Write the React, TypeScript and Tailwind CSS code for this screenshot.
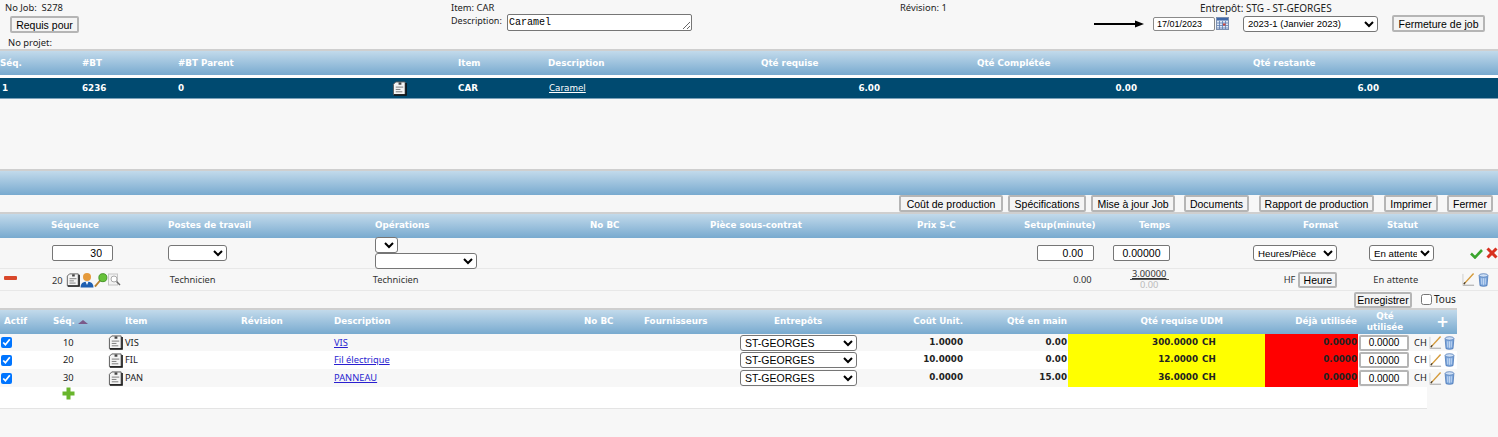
import React from "react";

// petites icônes de l'application
function NoteIcon({ className = "" }: { className?: string }) {
  return (
    <svg viewBox="0 0 16 16" className={className}>
      <path d="M1.5 3.5 L4 1 H14 V14.5 H1.5 Z" fill="#f4f4f4" stroke="#555" strokeWidth="1" />
      <path d="M2 15 H15 V2" fill="none" stroke="#111" strokeWidth="1.6" />
      <rect x="7" y="1.5" width="3" height="2.5" fill="#444" />
      <path d="M4 6.5 H12 M4 9 H9 M4 11.5 H11" stroke="#777" strokeWidth="1" />
    </svg>
  );
}

function EditIcon() {
  return (
    <svg viewBox="0 0 14 16" className="w-[13px] h-[15px]">
      <path d="M1 15 H13 V13.5 H1 Z" fill="#bbb" />
      <path d="M1 14.5 V2" stroke="#ccc" strokeWidth="1" />
      <path d="M2 13 L12.5 1.5" stroke="#d49a3a" strokeWidth="1.5" />
      <path d="M2 13 L3.5 11" stroke="#333" strokeWidth="1.2" />
    </svg>
  );
}

function TrashIcon() {
  return (
    <svg viewBox="0 0 12 16" className="w-[11px] h-[14px]">
      <path d="M1 3 L2 14.5 Q6 16 10 14.5 L11 3 Z" fill="#7fa8dc" stroke="#3e6db0" strokeWidth="0.8" />
      <ellipse cx="6" cy="2.8" rx="5" ry="2" fill="#cfe0f5" stroke="#3e6db0" strokeWidth="0.8" />
      <path d="M4 6 V13 M6 6 V13.5 M8 6 V13" stroke="#d5e4f7" strokeWidth="0.9" />
    </svg>
  );
}

function CalendarIcon() {
  return (
    <svg viewBox="0 0 13 13" className="w-[13px] h-[13px] ml-[1px]">
      <rect x="0.5" y="0.5" width="12" height="12" fill="#dfe8f4" stroke="#7b8fb0" />
      <rect x="1" y="1" width="11" height="2.5" fill="#3f67a8" />
      <path d="M1 6 H12 M1 8.5 H12 M1 11 H12 M3.5 4 V12 M6.5 4 V12 M9.5 4 V12" stroke="#5c7bb0" strokeWidth="0.8" />
      <rect x="7" y="6.5" width="2.5" height="2" fill="#d0483c" />
    </svg>
  );
}

function UserIcon() {
  return (
    <svg viewBox="0 0 14 16" className="w-[14px] h-[16px]">
      <path d="M0.5 15.5 Q0.5 9.5 7 9.5 Q13.5 9.5 13.5 15.5 Z" fill="#1f5fb0" />
      <circle cx="7" cy="5" r="4" fill="#e59a3c" />
      <path d="M5.5 9.5 L7 13 L8.5 9.5 Z" fill="#fff" />
    </svg>
  );
}

function ProbeIcon() {
  return (
    <svg viewBox="0 0 15 16" className="w-[14px] h-[16px]">
      <path d="M1 15 L7 8" stroke="#b9802e" strokeWidth="2" />
      <circle cx="9.5" cy="5.5" r="4.3" fill="#67c23a" stroke="#3f8f22" />
    </svg>
  );
}

function LensIcon() {
  return (
    <svg viewBox="0 0 13 13" className="w-[13px] h-[13px]">
      <rect x="0.5" y="1" width="9" height="11" fill="#f2f2f2" stroke="#c6c6c6" />
      <circle cx="6" cy="6" r="3" fill="#fff" stroke="#aaa" />
      <path d="M8.5 8.5 L12 12" stroke="#666" strokeWidth="1.4" />
    </svg>
  );
}

function Btn({ children, className = "" }: { children: React.ReactNode; className?: string }) {
  return (
    <button
      type="button"
      className={`shrink-0 bg-[#f4f4f4] border-2 border-[#b5b5b5] rounded-[2px] font-['Liberation_Sans',sans-serif] text-[10.5px] leading-[12px] text-black whitespace-nowrap ${className}`}
    >
      {children}
    </button>
  );
}

const selectBase =
  "h-[16px] bg-white border border-[#767676] rounded-[3px] font-['Liberation_Sans',sans-serif] leading-[14px] text-black";
const selectCls = `${selectBase} text-[9.7px]`;
const inputCls =
  "h-[16px] bg-white border border-[#767676] rounded-[2px] font-['Liberation_Sans',sans-serif] text-[10.5px] text-black";
const bandCls =
  "bg-gradient-to-b from-[#c2daeb] to-[#78aacf] border-t-2 border-[#cfcfcf] font-['DejaVu_Sans',sans-serif] font-bold text-[8.75px] text-white items-center";
const boldCls = "font-['DejaVu_Sans',sans-serif] font-bold text-[8.75px] text-[#222]";

const rows = [
  { seq: 10, item: "VIS", desc: "VIS", unit: "1.0000", main: "0.00", req: "300.0000", bg: "bg-[#f7f7f7]", h: "h-[17px]" },
  { seq: 20, item: "FIL", desc: "Fil électrique", unit: "10.0000", main: "0.00", req: "12.0000", bg: "bg-white", h: "h-[18px]" },
  { seq: 30, item: "PAN", desc: "PANNEAU", unit: "0.0000", main: "15.00", req: "36.0000", bg: "bg-[#f7f7f7]", h: "h-[18px]" },
];

const bottomGrid =
  "grid grid-cols-[53px_55px_17px_116px_93px_250px_60px_96px_130px_95px_103px_132px_65px_93px_54px_16px_29px]";

export default function App() {
  return (
    <div className="min-h-screen w-[1498px] overflow-hidden bg-[#f7f7f7] font-['Noto_Sans',sans-serif] text-[9.4px] text-[#222]">
      {/* entête de la job */}
      <div className="h-[49px] flex">
        <div className="w-[451px] shrink-0">
          <div className="pl-[5px] pt-[1px] h-[16px] leading-[14px]">No Job:&nbsp; S278</div>
          <div className="pl-[10px]">
            <Btn className="w-[69px] h-[17px]">Requis pour</Btn>
          </div>
          <div className="pl-[8px] pt-[3px] leading-[14px]">No projet:</div>
        </div>
        <div className="w-[449px] shrink-0">
          <div className="pt-[1px] h-[14px] leading-[14px]">Item: CAR</div>
          <div className="flex items-start">
            <span className="w-[56px] leading-[14px] text-[9px]">Description:</span>
            <textarea
              readOnly
              defaultValue="Caramel"
              className="w-[185px] h-[17px] bg-white border border-[#767676] rounded-[2px] px-[1px] pt-[1px] font-['Liberation_Mono',monospace] text-[10px] leading-[14px] text-black"
            />
          </div>
        </div>
        <div className="w-[100px] shrink-0 pt-[1px] leading-[14px]">Révision: 1</div>
        <div className="w-[498px] shrink-0">
          <div className="pt-[1px] h-[14px] leading-[14px] pl-[200px] text-[10px]">Entrepôt: STG - ST-GEORGES</div>
          <div className="flex items-center mt-[1px]">
            <svg viewBox="0 0 50 8" className="w-[50px] h-[8px] ml-[94px] mr-[9px] shrink-0">
              <path d="M0 4 H42" stroke="#000" strokeWidth="2" />
              <path d="M41 0.5 L50 4 L41 7.5 Z" fill="#000" />
            </svg>
            <input
              readOnly
              defaultValue="17/01/2023"
              className="w-[62px] h-[14px] bg-white border border-[#8a8a8a] rounded-[2px] px-[3px] font-['Liberation_Sans',sans-serif] text-[9px] text-black"
            />
            <CalendarIcon />
            <select className={`${selectBase} text-[9.5px] w-[135px] ml-[14px]`}>
              <option>2023-1 (Janvier 2023)</option>
            </select>
            <Btn className="w-[93px] h-[17px] ml-[14px]">Fermeture de job</Btn>
          </div>
        </div>
      </div>

      {/* liste des BT */}
      <div className={`grid grid-cols-[82px_96px_280px_90px_213px_216px_276px_245px] h-[26px] pt-[1px] ${bandCls}`}>
        <span>Séq.</span>
        <span>#BT</span>
        <span>#BT Parent</span>
        <span>Item</span>
        <span>Description</span>
        <span>Qté requise</span>
        <span>Qté Complétée</span>
        <span>Qté restante</span>
      </div>
      <div className="h-[3px] bg-white" />
      <div className="grid grid-cols-[82px_96px_214px_66px_90px_213px_216px_276px_245px] h-[21px] pt-[1px] items-center bg-[#004a70] border-b border-[#7aa0b8] font-['DejaVu_Sans',sans-serif] font-bold text-[8.75px] text-white">
        <span className="pl-[2px]">1</span>
        <span>6236</span>
        <span>0</span>
        <span>
          <NoteIcon className="w-[15px] h-[15px]" />
        </span>
        <span>CAR</span>
        <span className="font-normal underline pl-[1px]">Caramel</span>
        <span className="w-[119px] text-right">6.00</span>
        <span className="w-[160px] text-right">0.00</span>
        <span className="w-[126px] text-right">6.00</span>
      </div>
      <div className="h-[70px]" />

      {/* opérations */}
      <div className={`h-[26px] ${bandCls}`} />
      <div className="h-[17px] flex justify-end pr-[5px] bg-[#f7f7f7]">
        <Btn className="h-[17px] w-[104px]">Coût de production</Btn>
        <Btn className="h-[17px] w-[78px] ml-[5px]">Spécifications</Btn>
        <Btn className="h-[17px] w-[84px] ml-[5px]">Mise à jour Job</Btn>
        <Btn className="h-[17px] w-[65px] ml-[9px]">Documents</Btn>
        <Btn className="h-[17px] w-[115px] ml-[10px]">Rapport de production</Btn>
        <Btn className="h-[17px] w-[54px] ml-[10px]">Imprimer</Btn>
        <Btn className="h-[17px] w-[46px] ml-[9px]">Fermer</Btn>
      </div>
      <div className={`grid grid-cols-[51px_117px_207px_215px_120px_207px_107px_115px_164px_84px_111px] h-[26px] ${bandCls}`}>
        <span />
        <span>Séquence</span>
        <span>Postes de travail</span>
        <span>Opérations</span>
        <span>No BC</span>
        <span>Pièce sous-contrat</span>
        <span>Prix S-C</span>
        <span>Setup(minute)</span>
        <span>Temps</span>
        <span>Format</span>
        <span>Statut</span>
      </div>

      {/* ligne de saisie */}
      <div className="h-[30px] flex items-center">
        <input readOnly defaultValue="30" className={`${inputCls} w-[61px] ml-[52px] px-[10px] text-right`} />
        <select className={`${selectCls} w-[59px] ml-[55px]`} />
        <div className="ml-[148px] w-[102px] flex flex-col">
          <select className={`${selectCls} w-[23px] h-[15px]`} />
          <select className={`${selectCls} w-[102px] h-[14px]`} />
        </div>
        <input readOnly defaultValue="0.00" className={`${inputCls} w-[57px] ml-[560px] px-[10px] text-right`} />
        <input readOnly defaultValue="0.00000" className={`${inputCls} w-[57px] ml-[19px] px-[4px] text-center`} />
        <select className={`${selectCls} w-[84px] ml-[83px]`}>
          <option>Heures/Pièce</option>
        </select>
        <select className={`${selectCls} w-[65px] ml-[32px]`}>
          <option>En attente</option>
        </select>
        <svg viewBox="0 0 13 11" className="w-[13px] h-[11px] ml-[36px]">
          <path d="M1 5.5 L5 9.5 L12 2" fill="none" stroke="#3aa52e" strokeWidth="2.6" />
        </svg>
        <svg viewBox="0 0 12 12" className="w-[12px] h-[12px] ml-[3px]">
          <path d="M1.5 1.5 L10.5 10.5 M10.5 1.5 L1.5 10.5" stroke="#d8301f" strokeWidth="3" />
        </svg>
      </div>

      {/* ligne séquence 20 */}
      <div className="h-[23px] flex items-center border-t border-b border-[#e8e8e8] text-[#333] text-[9.3px]">
        <div className="w-[13px] h-[4px] ml-[4px] bg-[#d9482b] rounded-[1px] -translate-y-[2px]" />
        <span className="ml-[35px] mt-[3px]">20</span>
        <NoteIcon className="w-[14px] h-[14px] ml-[3px]" />
        <UserIcon />
        <ProbeIcon />
        <LensIcon />
        <span className="ml-[49px] w-[203px]">Technicien</span>
        <span className="w-[680px]">Technicien</span>
        <span className="w-[39px] text-right">0.00</span>
        <div className="ml-[38px] w-[39px] text-center leading-[10px]">
          <div className="border-b border-[#555] underline">3.00000</div>
          <div className="text-[#bbb]">0.00</div>
        </div>
        <span className="ml-[115px]">HF</span>
        <Btn className="w-[39px] ml-[3px] h-[16px]">Heure</Btn>
        <span className="ml-[36px] w-[89px]">En attente</span>
        <EditIcon />
        <span className="ml-[3px]">
          <TrashIcon />
        </span>
      </div>

      <div className="h-[17px] flex items-center">
        <Btn className="w-[58px] ml-[1354px] h-[16px]">Enregistrer</Btn>
        <input type="checkbox" className="w-[11px] h-[11px] ml-[9px]" />
        <span className="ml-[2px] text-[10px]">Tous</span>
      </div>

      {/* matières */}
      <div className="w-[1457px]">
        <div className={`${bottomGrid} h-[26px] ${bandCls}`}>
          <span className="pl-[4px]">Actif</span>
          <span className="col-span-2 flex items-center">
            Séq.
            <svg viewBox="0 0 10 4" className="w-[10px] h-[4px] ml-[3px]">
              <path d="M0 4 L5 0 L10 4 Z" fill="#7a5a8a" />
            </svg>
          </span>
          <span>Item</span>
          <span>Révision</span>
          <span>Description</span>
          <span>No BC</span>
          <span>Fournisseurs</span>
          <span className="pl-[34px]">Entrepôts</span>
          <span className="text-right pr-[2px]">Coût Unit.</span>
          <span className="text-right pr-[1px]">Qté en main</span>
          <span className="text-right pr-[2px]">Qté requise</span>
          <span>UDM</span>
          <span className="text-right pr-[1px]">Déjà utilisée</span>
          <span className="text-center leading-[11px]">
            Qté
            <br />
            utilisée
          </span>
          <span />
          <span className="text-[15px] leading-[15px] text-center">+</span>
        </div>
        {rows.map((r) => (
          <div key={r.seq} className={`${bottomGrid} ${r.h} ${r.bg} items-center text-[#222] text-[9.3px]`}>
            <span className="pl-[1px] flex items-center">
              <input type="checkbox" readOnly checked className="w-[11px] h-[11px] m-0 accent-[#0075ff]" />
            </span>
            <span className="pl-[10px]">{r.seq}</span>
            <NoteIcon className="w-[15px] h-[15px]" />
            <span>{r.item}</span>
            <span />
            <a href="#" className="text-[#2a1fd0] underline">
              {r.desc}
            </a>
            <span />
            <span />
            <select className={`${selectBase} text-[10.5px] w-[117px]`}>
              <option>ST-GEORGES</option>
            </select>
            <span className={`text-right pr-[2px] ${boldCls}`}>{r.unit}</span>
            <span className={`text-right pr-[1px] ${boldCls}`}>{r.main}</span>
            <span className={`h-full flex items-center justify-end pr-[2px] bg-[#ffff00] ${boldCls}`}>{r.req}</span>
            <span className={`h-full flex items-center pl-[2px] bg-[#ffff00] ${boldCls}`}>CH</span>
            <span className={`h-full flex items-center justify-end pr-[1px] bg-[#ff0000] ${boldCls}`}>0.0000</span>
            <input
              readOnly
              defaultValue="0.0000"
              className="w-[50px] h-[16px] ml-[1px] bg-white border-2 border-[#b5b5b5] rounded-[2px] text-center font-['Liberation_Sans',sans-serif] text-[10px] text-black"
            />
            <span className="pl-[2px]">CH</span>
            <span className="flex items-center gap-[2px] pl-[1px]">
              <EditIcon />
              <TrashIcon />
            </span>
          </div>
        ))}
        <div className="w-[1427px] h-[22px] bg-white border-b border-[#e4e4e4]">
          <svg viewBox="0 0 13 13" className="w-[13px] h-[13px] ml-[62px]">
            <path d="M6.5 0.5 V12.5 M0.5 6.5 H12.5" stroke="#69b52c" strokeWidth="4" />
          </svg>
        </div>
      </div>
    </div>
  );
}
